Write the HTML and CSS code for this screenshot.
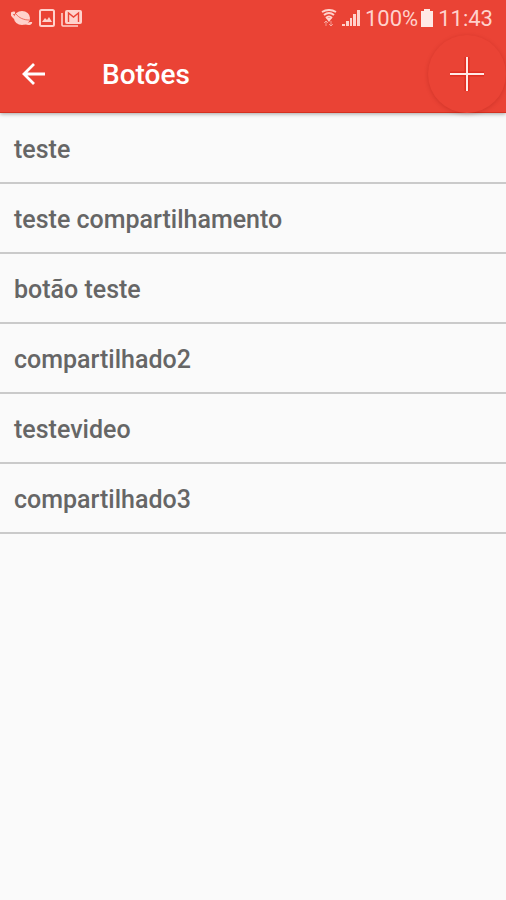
FILE: index.html
```html
<!DOCTYPE html>
<html lang="pt">
<head>
<meta charset="utf-8">
<meta name="viewport" content="width=device-width, initial-scale=1">
<title>Botões</title>
<link rel="stylesheet" href="styles.css">
</head>
<body>
<header class="header">
  <div class="status">
    <div class="notifications">
      <svg width="22" height="18" viewBox="0 0 22 18" aria-hidden="true">
        <ellipse cx="11" cy="9" rx="8" ry="7" fill="currentColor"/>
        <path d="M4 4C-1 3 0 7 7 11s13 5 13 2" fill="none" stroke="currentColor" stroke-width="2.500"/>
        <path d="M5 5c3 4 8 6 13 6" fill="none" stroke="#ea4335" stroke-width="1" opacity=".7"/>
      </svg>
      <svg width="16" height="18" viewBox="0 0 16 18" aria-hidden="true">
        <rect x="1" y="1" width="14" height="16" rx="1.5" fill="none" stroke="currentColor" stroke-width="2"/>
        <path d="M3 13l3-4 2 2 2-3 3 5z" fill="currentColor"/>
      </svg>
      <svg width="22" height="18" viewBox="0 0 22 18" aria-hidden="true">
        <path d="M1 4v12q0 1 1 1h15" fill="none" stroke="currentColor" stroke-width="1.6"/>
        <rect x="4" y="1" width="17" height="14" rx="2" fill="currentColor"/>
        <path d="M7.500 13V4l5 4 5-4v9" fill="none" stroke="#ea4335" stroke-width="1.400"/>
      </svg>
    </div>
    <div class="system">
      <svg width="16" height="18" viewBox="0 0 16 18" aria-hidden="true">
        <path d="M1 3q7-4 14 0M3 6q5-4 10 0M5 9q3-3 6 0" fill="none" stroke="currentColor" stroke-width="2"/>
        <path d="M5 9h6l-3 4z" fill="currentColor"/>
        <path d="M5 12v5M3 14l2-2 2 2M10 12v5M8 15l2 2 2-2" fill="none" stroke="currentColor" opacity=".6"/>
      </svg>
      <svg width="18" height="18" viewBox="0 0 18 18" aria-hidden="true">
        <path d="M0 17v-2h3v2zM4 17v-5h3v5zM8 17V9h2v8zM11 17V5h3v12zM15 17V1h3v16z" fill="currentColor"/>
      </svg>
      <span class="level">100%</span>
      <svg class="battery" width="12" height="18" viewBox="0 0 12 18" aria-hidden="true">
        <path d="M3 0h6v2h3v16H0V2h3z" fill="currentColor"/>
      </svg>
      <time>11:43</time>
    </div>
  </div>
  <div class="toolbar">
    <button class="back" type="button" aria-label="Voltar">
      <svg width="24" height="24" viewBox="0 0 24 24" aria-hidden="true">
        <path d="M12 2L2 12l10 10M2 12h21" fill="none" stroke="currentColor" stroke-width="2.800"/>
      </svg>
    </button>
    <h1>Botões</h1>
    <button class="add" type="button" aria-label="Adicionar">
      <svg width="34" height="34" viewBox="0 0 34 34" aria-hidden="true">
        <path d="M17 0v34M0 17h34" fill="none" stroke="#d3180f" stroke-width="5" opacity=".5"/>
        <path d="M17 0v34M0 17h34" fill="none" stroke="#ffe9e6" stroke-width="2"/>
      </svg>
    </button>
  </div>
</header>
<main>
  <ul class="list">
    <li>teste</li>
    <li>teste compartilhamento</li>
    <li>botão teste</li>
    <li>compartilhado2</li>
    <li>testevideo</li>
    <li>compartilhado3</li>
  </ul>
</main>
</body>
</html>
```
FILE: styles.css
```css
* { box-sizing: border-box; }
body {
  margin: 0;
  min-height: 100vh;
  background: #fafafa;
  font-family: Roboto, "Liberation Sans", sans-serif;
}
svg { display: block; flex: none; }
.header {
  background: #ea4335;
  color: #fff;
  border-bottom: 1px solid #d5301f;
  box-shadow: 0 1px 4px rgba(0, 0, 0, .35);
}
.status {
  display: flex;
  justify-content: space-between;
  align-items: center;
  height: 36px;
  padding: 0 13px 0 11px;
  color: #ffd2cc;
  font-size: 22px;
  line-height: 36px;
}
.notifications,
.system { display: flex; align-items: center; }
.notifications { gap: 6px; }
.system { gap: 5px; }
.level,
time { padding-top: 2px; }
.level { margin-right: -2px; }
.battery { color: #ffe9e6; }
.toolbar {
  display: flex;
  align-items: center;
  height: 76px;
}
button {
  display: flex;
  align-items: center;
  justify-content: center;
  flex: none;
  padding: 0;
  border: 0;
  background: none;
  color: #fff;
}
.back { width: 68px; height: 68px; }
h1 {
  flex: 1;
  margin: 0;
  padding: 2px 0 0 34px;
  font-size: 28px;
  font-weight: 500;
  line-height: 32px;
}
.add {
  width: 78px;
  height: 78px;
  border-radius: 50%;
  background: #ea4335;
  box-shadow: 0 1px 4px rgba(120, 10, 0, .22);
}
.list {
  margin: 0;
  padding: 1px 0 0;
  list-style: none;
}
.list li {
  padding: 22px 14px 18px;
  border-bottom: 2px solid #cacaca;
  color: #666;
  font-size: 25px;
  font-weight: 500;
  line-height: 28px;
}
```
